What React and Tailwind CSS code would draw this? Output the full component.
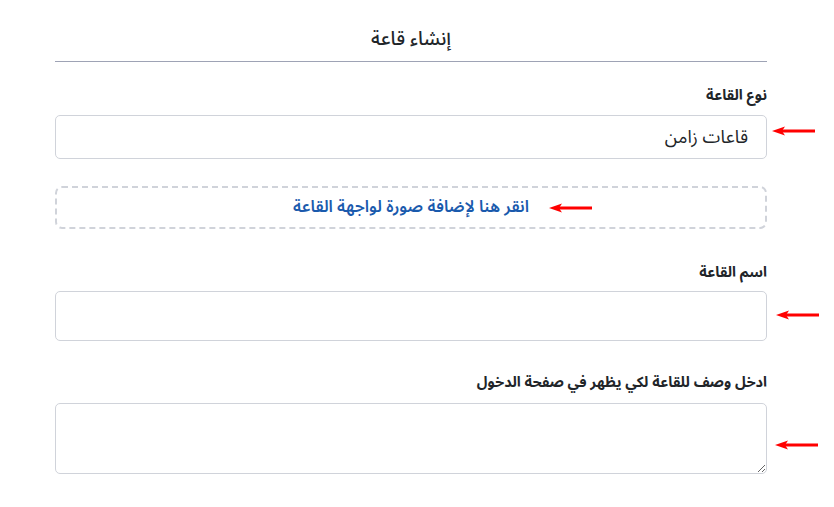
import React from 'react';

const FONT = { fontFamily: '"Noto Sans Arabic", "DejaVu Sans", "Noto Sans", sans-serif' };

const Arrow = ({ className = '' }) => (
  <svg className={`shrink-0 ${className}`} width="43" height="10" viewBox="0 0 43 10">
    <path d="M10 5 H43" stroke="#ff0000" strokeWidth="3" />
    <path d="M0 5 L13 0.5 L10 5 L13 9.5 Z" fill="#ff0000" />
  </svg>
);

const Label = ({ children, className = '' }) => (
  <div dir="rtl" className={`w-[712px] text-[14.5px] leading-[20px] font-bold text-[#212529] ${className}`}>
    {children}
  </div>
);

export default function App() {
  return (
    <div className="min-h-screen bg-white text-[#212529] pl-[55px]" style={FONT}>
      <div className="w-[712px] h-[62px] border-b border-[#9ea3b5] flex items-end justify-center pb-[8px]">
        <h1 dir="rtl" className="text-[19px] leading-[28px] font-medium">إنشاء قاعة</h1>
      </div>

      <Label className="mt-[24px]">نوع القاعة</Label>
      <div className="flex items-start mt-[9px]">
        <div dir="rtl" className="w-[712px] h-[44px] border border-[#d0d3da] rounded-[5px] flex items-center px-[18px] text-[18px]">
          قاعات زامن
        </div>
        <Arrow className="ml-[5px] mt-[11px]" />
      </div>

      <div className="w-[712px] mt-[27px] h-[43px] border-2 border-dashed border-[#d0d3da] rounded-[7px] grid grid-cols-[1fr_auto_1fr] items-center">
        <div />
        <span dir="rtl" className="text-[16.4px] font-semibold text-[#1a5aad]">انقر هنا لإضافة صورة لواجهة القاعة</span>
        <div className="flex">
          <Arrow className="ml-[20px]" />
        </div>
      </div>

      <Label className="mt-[34px]">اسم القاعة</Label>
      <div className="flex items-start mt-[8px]">
        <input dir="rtl" className="block w-[712px] h-[50px] border border-[#d0d3da] rounded-[5px] outline-none" />
        <Arrow className="ml-[9px] mt-[19px]" />
      </div>

      <Label className="mt-[32px]">ادخل وصف للقاعة لكي يظهر في صفحة الدخول</Label>
      <div className="flex items-start mt-[10px]">
        <textarea className="block w-[712px] h-[71px] border border-[#d0d3da] rounded-[5px] outline-none" />
        <Arrow className="ml-[8px] mt-[37px]" />
      </div>
    </div>
  );
}
